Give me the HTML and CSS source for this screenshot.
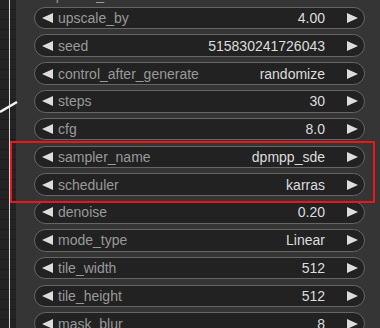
FILE: index.html
```html
<!DOCTYPE html>
<html lang="en">
<head>
    <meta charset="UTF-8">
    <title>Ultimate SD Upscale widgets</title>
    <link rel="stylesheet" href="styles.css">
</head>
<body>
    <div class="canvas">
        <div class="gutter">
            <div class="edge"></div>
        </div>
        <div class="node">
            <div class="cut-label">upscale_model</div>
            <div class="widget"><span class="arrow left"></span><span class="name">upscale_by</span><span class="value">4.00</span><span class="arrow right"></span></div>
            <div class="widget"><span class="arrow left"></span><span class="name">seed</span><span class="value">515830241726043</span><span class="arrow right"></span></div>
            <div class="widget"><span class="arrow left"></span><span class="name">control_after_generate</span><span class="value">randomize</span><span class="arrow right"></span></div>
            <div class="widget"><span class="arrow left"></span><span class="name">steps</span><span class="value">30</span><span class="arrow right"></span></div>
            <div class="widget"><span class="arrow left"></span><span class="name">cfg</span><span class="value">8.0</span><span class="arrow right"></span></div>
            <div class="widget"><span class="arrow left"></span><span class="name">sampler_name</span><span class="value">dpmpp_sde</span><span class="arrow right"></span></div>
            <div class="widget"><span class="arrow left"></span><span class="name">scheduler</span><span class="value">karras</span><span class="arrow right"></span></div>
            <div class="widget"><span class="arrow left"></span><span class="name">denoise</span><span class="value">0.20</span><span class="arrow right"></span></div>
            <div class="widget"><span class="arrow left"></span><span class="name">mode_type</span><span class="value">Linear</span><span class="arrow right"></span></div>
            <div class="widget"><span class="arrow left"></span><span class="name">tile_width</span><span class="value">512</span><span class="arrow right"></span></div>
            <div class="widget"><span class="arrow left"></span><span class="name">tile_height</span><span class="value">512</span><span class="arrow right"></span></div>
            <div class="widget"><span class="arrow left"></span><span class="name">mask_blur</span><span class="value">8</span><span class="arrow right"></span></div>
        </div>
        <svg class="wire" width="20" height="20" viewBox="0 0 20 20">
            <line x1="0" y1="12" x2="17" y2="2" stroke="#f2f2f2" stroke-width="2.5"/>
        </svg>
        <div class="highlight"></div>
    </div>
</body>
</html>
```

FILE: styles.css
```css
html, body { margin: 0; padding: 0; }
body { background: #222; font-family: "Liberation Sans", Arial, sans-serif; width: 380px; height: 328px; overflow: hidden; }

.canvas { position: relative; display: flex; width: 380px; height: 328px; overflow: hidden; }

.gutter { width: 16px; flex-shrink: 0; background-color: #232323; background-image: repeating-linear-gradient(to bottom, transparent 0, transparent 9px, #1b1b1b 9px, #1b1b1b 10px); }
.edge { width: 1px; height: 100%; margin-left: 9px; background: #d8d8d8; }

.node { flex: 1; background: #353535; padding: 0 0 0 18px; display: flex; flex-direction: column; gap: 5.2px; }

.cut-label { height: 14px; margin-top: -12.5px; margin-bottom: 0; padding-left: 14px; font-size: 14px; line-height: 14px; color: #999; }

.widget { width: 331px; height: 22.6px; box-sizing: border-box; border: 1px solid #666; border-radius: 12px; background: #222; display: flex; align-items: center; padding: 0 6px 0 7px; font-size: 14px; flex-shrink: 0; }
.name { color: #999; margin-left: 5px; white-space: nowrap; }
.value { color: #ddd; margin-left: auto; white-space: nowrap; }

.arrow { width: 0; height: 0; border-top: 5.5px solid transparent; border-bottom: 5.5px solid transparent; flex-shrink: 0; }
.arrow.left { border-right: 11px solid #ddd; }
.arrow.right { border-left: 11px solid #ddd; margin-left: 22px; }

.wire { position: absolute; left: 0; top: 100px; }

.highlight { position: absolute; left: 10px; top: 141px; width: 361px; height: 58px; border: 2px solid #e8171f; }
```
